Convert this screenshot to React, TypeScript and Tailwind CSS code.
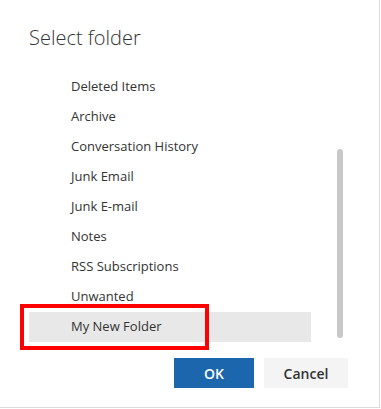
import React from "react";

const items = [
  "Deleted Items",
  "Archive",
  "Conversation History",
  "Junk Email",
  "Junk E-mail",
  "Notes",
  "RSS Subscriptions",
  "Unwanted",
  "My New Folder",
];

export default function App() {
  return (
    <div
      className="relative w-[381px] h-[409px] bg-white"
      style={{ fontFamily: '"Open Sans", "Noto Sans", sans-serif' }}
    >
      <div className="w-[380px] h-[408px] border-r border-b border-[#dcdcdc] flex flex-col">
        <h1 className="pl-[29px] pt-[24px] h-[72px] text-[20px] font-light text-[#333333] leading-[28px]">
          Select folder
        </h1>
        <div className="flex pl-[29px]">
          <ul className="w-[282px]">
            {items.map((it) => (
              <li
                key={it}
                className={
                  "h-[30px] flex items-center pl-[42px] text-[13px] text-[#333333] " +
                  (it === "My New Folder" ? "bg-[#e8e8e8]" : "")
                }
              >
                {it}
              </li>
            ))}
          </ul>
          <div className="ml-[26px] w-[6px] pt-[77px] pb-[4px] flex">
            <div className="w-[6px] flex-1 rounded-full bg-[#c8c8c8]" />
          </div>
        </div>
        <div className="flex justify-end gap-[10px] pr-[31px] mt-[16px]">
          <button className="w-[80px] h-[30px] bg-[#1b66ad] text-white text-[14px] font-semibold">
            OK
          </button>
          <button className="w-[84px] h-[30px] bg-[#f4f4f4] text-[#333333] text-[14px] font-semibold">
            Cancel
          </button>
        </div>
      </div>
      <div className="absolute left-[20px] top-[304px] w-[189px] h-[46px] border-[4px] border-[#ff0000]" />
    </div>
  );
}
